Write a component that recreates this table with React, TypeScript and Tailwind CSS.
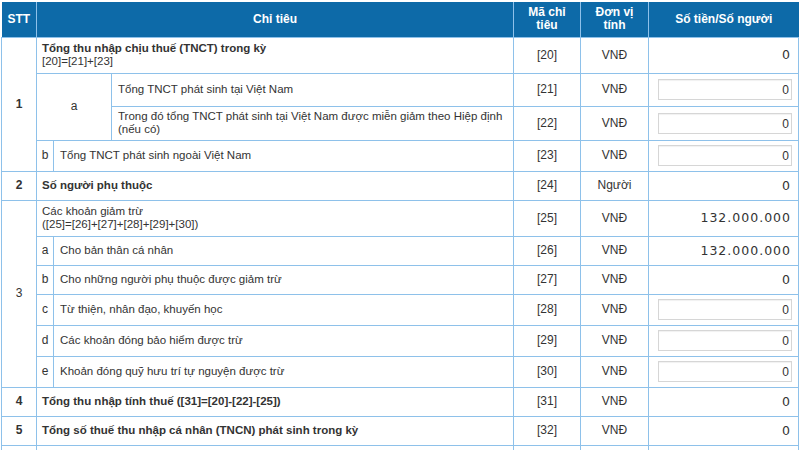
import React from "react";

type Sub = { letter: string; text: string; code: string; unit: string; value: string; input?: boolean };

const bd = "border border-[#8ec1ea]";

const ValueCell: React.FC<{ value: string; input?: boolean }> = ({ value, input }) => (
  <td className={`${bd} px-[8px] text-right align-middle`}>
    {input ? (
      <div className="ml-auto h-[21px] w-[134px] -mr-[2px] border border-[#d6d6d6] bg-white pr-[2px] text-right leading-[20px] shadow-[inset_0_1px_1px_rgba(0,0,0,0.06)]">
        {value}
      </div>
    ) : (
      <span className="-mr-[1px] text-[12.5px] tracking-[1px]" style={{ fontFamily: '"DejaVu Sans", Verdana, sans-serif' }}>
        {value}
      </span>
    )}
  </td>
);

const App: React.FC = () => {
  const group3: Sub[] = [
    { letter: "a", text: "Cho bản thân cá nhân", code: "[26]", unit: "VNĐ", value: "132.000.000" },
    { letter: "b", text: "Cho những người phụ thuộc được giảm trừ", code: "[27]", unit: "VNĐ", value: "0" },
    { letter: "c", text: "Từ thiện, nhân đạo, khuyến học", code: "[28]", unit: "VNĐ", value: "0", input: true },
    { letter: "d", text: "Các khoản đóng bảo hiểm được trừ", code: "[29]", unit: "VNĐ", value: "0", input: true },
    { letter: "e", text: "Khoản đóng quỹ hưu trí tự nguyện được trừ", code: "[30]", unit: "VNĐ", value: "0", input: true },
  ];

  return (
    <div className="w-[800px] h-[450px] overflow-hidden bg-white pt-[2px] pl-[1px]" style={{ fontFamily: '"Liberation Sans", Arial, sans-serif' }}>
      <table className="w-[798px] table-fixed border-collapse text-[12px] text-[#333]">
        <colgroup>
          <col className="w-[35px]" />
          <col className="w-[17px]" />
          <col className="w-[58px]" />
          <col className="w-[402px]" />
          <col className="w-[67px]" />
          <col className="w-[68px]" />
          <col />
        </colgroup>
        <thead>
          <tr className="h-[35px] bg-[#0d6aa8] font-bold text-white leading-[13px]">
            <th className="border-r border-[#8ec1ea] text-center">STT</th>
            <th colSpan={3} className="border-r border-[#8ec1ea] text-center">Chỉ tiêu</th>
            <th className="border-r border-[#8ec1ea] text-center">Mã chỉ<br />tiêu</th>
            <th className="border-r border-[#8ec1ea] text-center">Đơn vị<br />tính</th>
            <th className="text-center">Số tiền/Số người</th>
          </tr>
        </thead>
        <tbody className="leading-[13px]">
          <tr className="h-[36px]">
            <td rowSpan={4} className={`${bd} text-center font-bold`}>1</td>
            <td colSpan={3} className={`${bd} px-[5px] text-[11.5px]`}>
              <span className="font-bold">Tổng thu nhập chịu thuế (TNCT) trong kỳ</span>
              <br />
              [20]=[21]+[23]
            </td>
            <td className={`${bd} text-center`}>[20]</td>
            <td className={`${bd} text-center`}>VNĐ</td>
            <ValueCell value="0" />
          </tr>
          <tr className="h-[33px]">
            <td rowSpan={2} colSpan={2} className={`${bd} text-center`}>a</td>
            <td className={`${bd} px-[6px] text-[11.5px]`}>Tổng TNCT phát sinh tại Việt Nam</td>
            <td className={`${bd} text-center`}>[21]</td>
            <td className={`${bd} text-center`}>VNĐ</td>
            <ValueCell value="0" input />
          </tr>
          <tr className="h-[34px]">
            <td className={`${bd} px-[6px] text-[11.5px]`}>Trong đó tổng TNCT phát sinh tại Việt Nam được miễn giảm theo Hiệp định (nếu có)</td>
            <td className={`${bd} text-center`}>[22]</td>
            <td className={`${bd} text-center`}>VNĐ</td>
            <ValueCell value="0" input />
          </tr>
          <tr className="h-[31px]">
            <td className={`${bd} text-center`}>b</td>
            <td colSpan={2} className={`${bd} px-[6px] text-[11.5px]`}>Tổng TNCT phát sinh ngoài Việt Nam</td>
            <td className={`${bd} text-center`}>[23]</td>
            <td className={`${bd} text-center`}>VNĐ</td>
            <ValueCell value="0" input />
          </tr>
          <tr className="h-[29px]">
            <td className={`${bd} text-center font-bold`}>2</td>
            <td colSpan={3} className={`${bd} px-[5px] text-[11.5px] font-bold`}>Số người phụ thuộc</td>
            <td className={`${bd} text-center`}>[24]</td>
            <td className={`${bd} text-center`}>Người</td>
            <ValueCell value="0" />
          </tr>
          <tr className="h-[36px]">
            <td rowSpan={6} className={`${bd} text-center`}>3</td>
            <td colSpan={3} className={`${bd} px-[5px] text-[11.5px]`}>
              Các khoản giảm trừ
              <br />
              ([25]=[26]+[27]+[28]+[29]+[30])
            </td>
            <td className={`${bd} text-center`}>[25]</td>
            <td className={`${bd} text-center`}>VNĐ</td>
            <ValueCell value="132.000.000" />
          </tr>
          {group3.map((r) => (
            <tr key={r.code} className={r.input ? "h-[31px]" : "h-[29px]"}>
              <td className={`${bd} text-center`}>{r.letter}</td>
              <td colSpan={2} className={`${bd} px-[6px] text-[11.5px]`}>{r.text}</td>
              <td className={`${bd} text-center`}>{r.code}</td>
              <td className={`${bd} text-center`}>{r.unit}</td>
              <ValueCell value={r.value} input={r.input} />
            </tr>
          ))}
          <tr className="h-[29px]">
            <td className={`${bd} text-center font-bold`}>4</td>
            <td colSpan={3} className={`${bd} px-[5px] text-[11.5px] font-bold`}>Tổng thu nhập tính thuế ([31]=[20]-[22]-[25])</td>
            <td className={`${bd} text-center`}>[31]</td>
            <td className={`${bd} text-center`}>VNĐ</td>
            <ValueCell value="0" />
          </tr>
          <tr className="h-[29px]">
            <td className={`${bd} text-center font-bold`}>5</td>
            <td colSpan={3} className={`${bd} px-[5px] text-[11.5px] font-bold`}>Tổng số thuế thu nhập cá nhân (TNCN) phát sinh trong kỳ</td>
            <td className={`${bd} text-center`}>[32]</td>
            <td className={`${bd} text-center`}>VNĐ</td>
            <ValueCell value="0" />
          </tr>
          <tr className="h-[29px]">
            <td className={`${bd}`}></td>
            <td colSpan={3} className={`${bd}`}></td>
            <td className={`${bd}`}></td>
            <td className={`${bd}`}></td>
            <td className={`${bd}`}></td>
          </tr>
        </tbody>
      </table>
    </div>
  );
};

export default App;
